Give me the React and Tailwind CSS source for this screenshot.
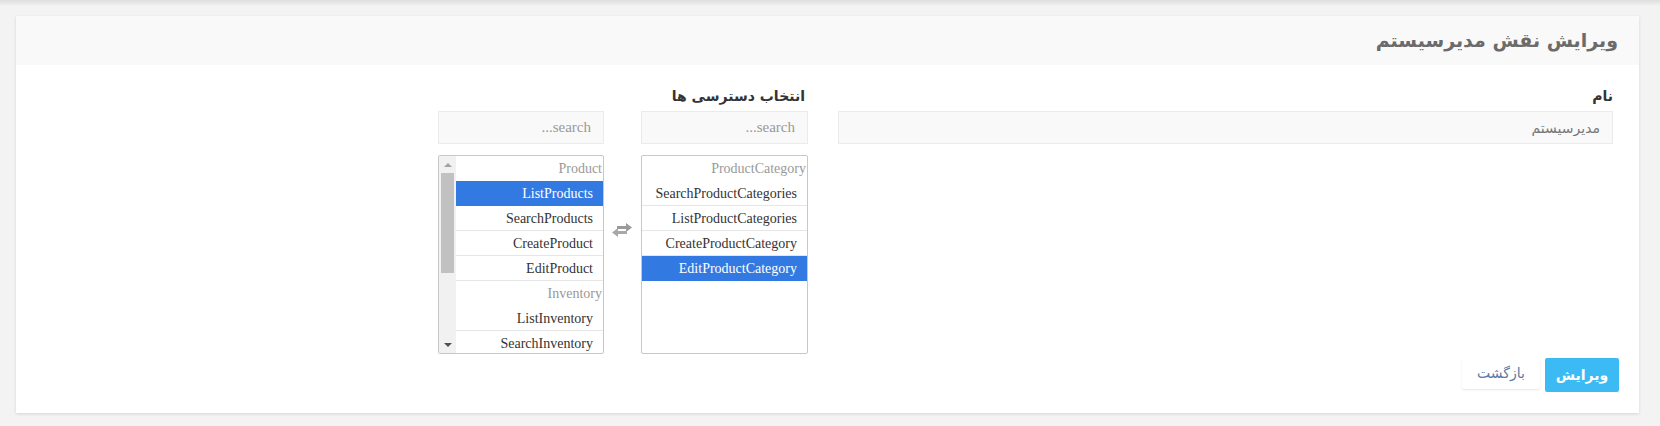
import React from "react";

const leftItems = [
  { group: "Product" },
  { label: "ListProducts", selected: true },
  { label: "SearchProducts" },
  { label: "CreateProduct" },
  { label: "EditProduct" },
  { group: "Inventory" },
  { label: "ListInventory" },
  { label: "SearchInventory" },
];

const rightItems = [
  { group: "ProductCategory" },
  { label: "SearchProductCategories" },
  { label: "ListProductCategories" },
  { label: "CreateProductCategory" },
  { label: "EditProductCategory", selected: true },
];

function Rows({ items }) {
  return items.map((item, index) =>
    item.group ? (
      <div
        key={index}
        className="flex h-[25px] items-center pr-[1px] text-[#999]"
      >
        {item.group}
      </div>
    ) : (
      <div
        key={index}
        className={
          item.selected
            ? "flex h-[25px] items-center bg-[#3279e2] pr-[10px] text-white"
            : "flex h-[25px] items-center border-b border-[#e6e6e6] pr-[10px] text-[#333]"
        }
      >
        {item.label}
      </div>
    )
  );
}

function SearchBox() {
  return (
    <input
      dir="ltr"
      placeholder="...search"
      className="h-[33px] w-full border border-[#ebebeb] bg-[#f9f9f9] px-[12px] text-right text-[15px] outline-none placeholder:text-[#999]"
      style={{ fontFamily: '"Liberation Serif", serif' }}
    />
  );
}

function ExchangeIcon() {
  return (
    <svg width="22" height="16" viewBox="0 0 22 16">
      <path d="M6 4h9V1l6 4.5-6 4.5V7H6z" fill="#9a9a9a" />
      <path d="M16 9H7V6l-6 4.5L7 15v-3h9z" fill="#a8a8a8" />
    </svg>
  );
}

export default function App() {
  return (
    <div
      dir="rtl"
      className="h-[426px] w-[1660px] overflow-hidden bg-[#f3f3f3]"
      style={{ fontFamily: '"DejaVu Sans", sans-serif' }}
    >
      <div className="h-[6px] bg-linear-to-b from-[#dedede] to-[#f3f3f3]" />
      <div className="pt-[10px] pl-[16px] pr-[21px]">
        <div className="flex h-[397px] flex-col bg-white shadow-[0_1px_3px_rgba(0,0,0,0.12)]">
          <div className="flex h-[49px] items-center bg-[#f9f9f9] pr-[21px]">
            <h1 className="text-[19px] font-bold text-[#6b6b6b]">
              ویرایش نقش مدیرسیستم
            </h1>
          </div>

          <div className="flex flex-1 flex-col px-[20px] pt-[21px] pb-[21px]">
            <div className="flex gap-[30px] pr-[6px]">
              <div className="w-[775px]">
                <div className="mb-[4px] h-[21px] text-[14px] font-bold text-[#333]">
                  نام
                </div>
                <input
                  defaultValue="مدیرسیستم"
                  className="h-[33px] w-full border border-[#ebebeb] bg-[#f9f9f9] px-[12px] text-[14px] text-[#777] outline-none"
                />
              </div>

              <div className="w-[370px]">
                <div className="mb-[4px] h-[21px] pr-[3px] text-[14px] font-bold text-[#333]">
                  انتخاب دسترسی ها
                </div>
                <div
                  className="flex gap-[37px] text-[14px]"
                  style={{ fontFamily: '"Liberation Serif", serif' }}
                >
                  <div className="w-[167px]">
                    <SearchBox />
                    <div className="mt-[11px] h-[199px] overflow-hidden rounded-[2px] border border-[#c8c8c8]">
                      <Rows items={rightItems} />
                    </div>
                  </div>

                  <div className="relative w-[166px]">
                    <div className="absolute top-[111px] right-[-29px]">
                      <ExchangeIcon />
                    </div>
                    <SearchBox />
                    <div className="mt-[11px] flex h-[199px] overflow-hidden rounded-[2px] border border-[#c8c8c8]">
                      <div className="flex-1">
                        <Rows items={leftItems} />
                      </div>
                      <div className="flex w-[17px] flex-col items-center bg-[#f1f1f1]">
                        <div className="flex h-[17px] items-center justify-center">
                          <div className="h-0 w-0 border-x-[4px] border-b-[4px] border-x-transparent border-b-[#a3a3a3]" />
                        </div>
                        <div className="h-[100px] w-[13px] bg-[#c1c1c1]" />
                        <div className="flex-1" />
                        <div className="flex h-[17px] items-center justify-center">
                          <div className="h-0 w-0 border-x-[4px] border-t-[4px] border-x-transparent border-t-[#505050]" />
                        </div>
                      </div>
                    </div>
                  </div>
                </div>
              </div>
            </div>

            <div className="mt-auto flex items-start gap-[5px]">
              <button className="h-[34px] w-[74px] rounded-[2px] bg-[#3bbaf4] text-[14px] font-bold text-white">
                ویرایش
              </button>
              <button className="h-[31px] w-[78px] rounded-[2px] bg-white text-[14px] text-[#5b7ca5] shadow-[0_1px_2px_rgba(0,0,0,0.1)]">
                بازگشت
              </button>
            </div>
          </div>
        </div>
      </div>
    </div>
  );
}
